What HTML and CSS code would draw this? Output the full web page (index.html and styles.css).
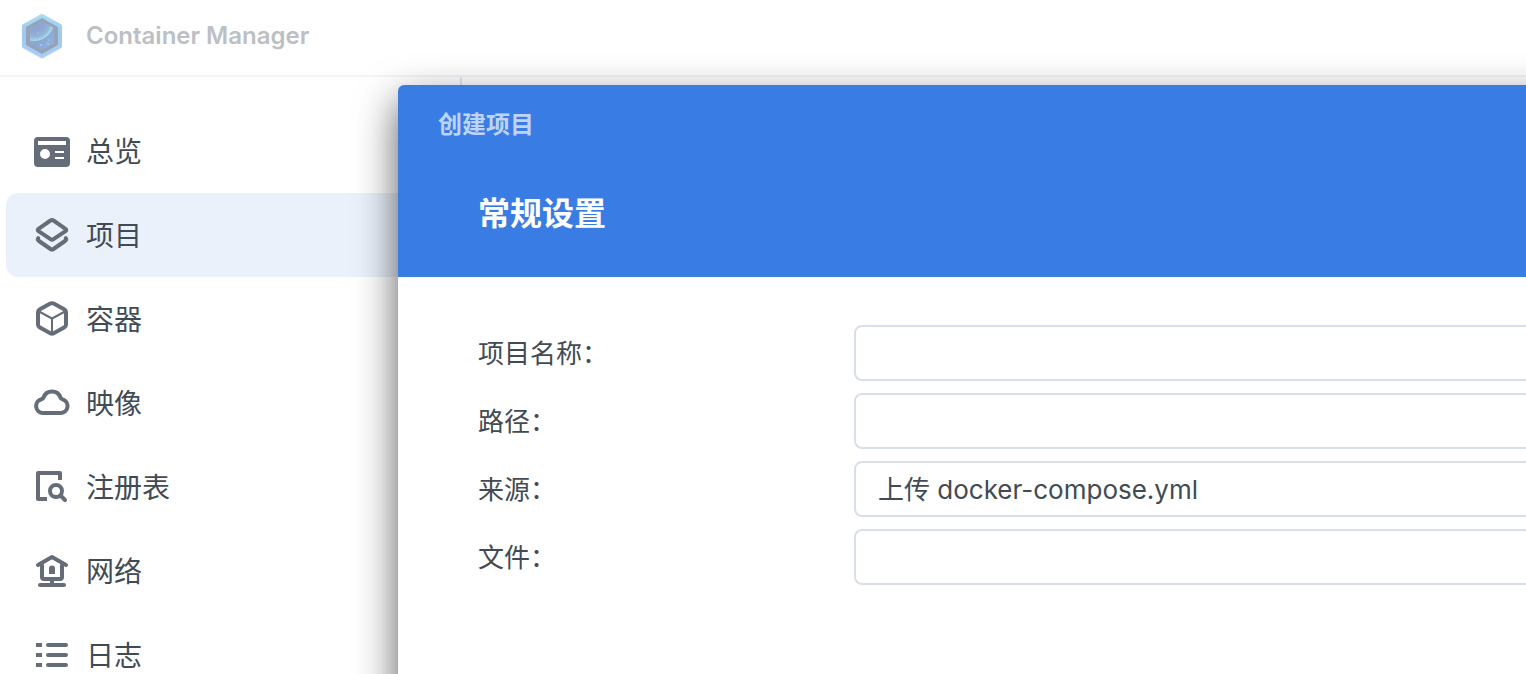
FILE: index.html
```html
<!DOCTYPE html>
<html lang="zh-CN">
<head>
<meta charset="utf-8">
<title>Container Manager</title>
<link rel="stylesheet" href="styles.css">
</head>
<body>
<div class="app">
  <header class="titlebar">
    <svg class="logo" viewBox="0 0 44 48" aria-hidden="true">
      <defs>
        <linearGradient id="rim" x1="0" y1="0" x2="0" y2="1"><stop offset="0" stop-color="#a9dcf3"/><stop offset=".4" stop-color="#9cc9ef"/><stop offset="1" stop-color="#a8cdf6"/></linearGradient>
        <linearGradient id="sky" x1="0" y1="0" x2="1" y2="1"><stop offset="0" stop-color="#9db2d8"/><stop offset=".5" stop-color="#8ca6d3"/><stop offset="1" stop-color="#8eb6e2"/></linearGradient>
        <radialGradient id="planet" gradientUnits="userSpaceOnUse" cx="14" cy="9" r="20"><stop offset=".5" stop-color="#8fa6d2"/><stop offset=".8" stop-color="#93b6da"/><stop offset="1" stop-color="#aedbe8"/></radialGradient>
        <clipPath id="window"><path d="M22 9 34 16V31L22 38 10 31V16Z"/></clipPath>
      </defs>
      <path d="M22 4 40 14V35L22 45 4 35V14Z" fill="#e6eaf0" stroke="#e6eaf0" stroke-width="4" stroke-linejoin="round"/>
      <path d="M22 4 40 14V34L22 44 4 34V14Z" fill="url(#rim)" stroke="url(#rim)" stroke-width="4" stroke-linejoin="round"/>
      <path d="M22 7 37 15.500V32.500L22 41 7 32.500V15.500Z" fill="#95a3b6" stroke="#95a3b6" stroke-width="2" stroke-linejoin="round"/>
      <path d="M22 9 34 16V31L22 38 10 31V16Z" fill="url(#sky)"/>
      <g clip-path="url(#window)">
        <circle cx="14" cy="9" r="20" fill="url(#planet)"/>
        <g fill="#c5ddf8"><circle cx="21" cy="33" r=".8"/><circle cx="28" cy="32" r=".8"/><circle cx="29" cy="28" r=".6"/><circle cx="18" cy="21" r=".6"/></g>
      </g>
    </svg>
    <h1 class="app-name">Container Manager</h1>
  </header>
  <div class="workspace">
    <nav class="sidebar">
      <a class="nav-item" href="#overview">
        <svg class="icon" viewBox="0 0 36 36" aria-hidden="true"><path fill="currentColor" fill-rule="evenodd" d="M4 4H32a4 4 0 0 1 4 4V30a4 4 0 0 1-4 4H4a4 4 0 0 1-4-4V8A4 4 0 0 1 4 4ZM4 8V12H32V8ZM11 16a5 5 0 1 0 0 10 5 5 0 0 0 0-10ZM21 18v2h9v-2ZM21 24v2h9v-2Z"/></svg>
        <span>总览</span></a>
      <a class="nav-item selected" href="#project" aria-current="page">
        <svg class="icon line" viewBox="0 0 36 36" aria-hidden="true"><path d="M16.500 3.500Q18 2.500 19.500 3.500L31.500 11.800Q33 13 31.500 14.200L19.500 22.200Q18 23.200 16.500 22.200L4.500 14.200Q3 13 4.500 11.800Z"/><path d="M4.200 21.200Q3.200 22.500 5 24L16.500 32Q18 33 19.500 32L31 24Q32.800 22.500 31.800 21.200"/></svg>
        <span>项目</span></a>
      <a class="nav-item" href="#container">
        <svg class="icon line" viewBox="0 0 36 36" aria-hidden="true"><path d="M16.300 2.600Q18 1.700 19.700 2.600L30.500 8.600Q32 9.400 32 11.400V23.400Q32 25.400 30.500 26.200L19.700 32.200Q18 33.100 16.300 32.200L5.500 26.200Q4 25.400 4 23.400V11.400Q4 9.400 5.500 8.600Z"/><path class="fine" d="M5 10.500 18 17.500 31 10.500M18 17.500V33"/></svg>
        <span>容器</span></a>
      <a class="nav-item" href="#image">
        <svg class="icon line" viewBox="0 0 36 36" aria-hidden="true"><path d="M9 28A7 7 0 0 1 7.500 14.200Q9.200 13.900 9.500 12.500A9 9 0 0 1 26.500 12.500Q26.800 14 28.500 14.300A7 7 0 0 1 27 28Z"/></svg>
        <span>映像</span></a>
      <a class="nav-item" href="#registry">
        <svg class="icon line" viewBox="0 0 36 36" aria-hidden="true"><path stroke-linecap="butt" d="M13 30H4V4H26V11"/><circle cx="22" cy="22" r="6"/><path d="M27 27 31 31"/></svg>
        <span>注册表</span></a>
      <a class="nav-item" href="#network">
        <svg class="icon line" viewBox="0 0 36 36" aria-hidden="true"><path d="M4 12 18 4 32 12M8 12V24Q8 26 10 26H26Q28 26 28 24V12M6 32H30"/><path stroke-linecap="butt" d="M18 26V32"/><path class="solid" d="M15 21V15.500a3 3 0 0 1 6 0V21Z"/></svg>
        <span>网络</span></a>
      <a class="nav-item" href="#log">
        <svg class="icon line" viewBox="0 0 36 36" aria-hidden="true"><path stroke-linecap="butt" d="M2 8H8M2 18H8M2 28H8"/><path d="M14 8H32M14 18H32M14 28H32"/></svg>
        <span>日志</span></a>
    </nav>
    <main class="content"></main>
  </div>
  <section class="dialog" role="dialog" aria-labelledby="dialog-title">
    <header class="dialog-head">
      <h2 class="dialog-title" id="dialog-title">创建项目</h2>
      <h3 class="step-title">常规设置</h3>
    </header>
    <form class="form">
      <div class="field"><label for="name">项目名称：</label><input class="control" id="name" type="text"></div>
      <div class="field"><label for="path">路径：</label><input class="control" id="path" type="text"></div>
      <div class="field"><label for="source">来源：</label><select class="control" id="source"><option>上传 docker-compose.yml</option></select></div>
      <div class="field"><label for="file">文件：</label><input class="control" id="file" type="text"></div>
    </form>
  </section>
</div>
</body>
</html>
```
FILE: styles.css
```css
* { box-sizing: border-box; }

body {
  margin: 0;
  font-family: Inter, "Noto Sans CJK SC", sans-serif;
  color: #414b55;
  background: #fff;
}

h1, h2, h3 { margin: 0; }

.app {
  position: relative;
  display: flex;
  flex-direction: column;
  height: 100vh;
  overflow: hidden;
}

.titlebar {
  display: flex;
  flex: none;
  align-items: center;
  gap: 22px;
  padding: 12px 20px 15px;
  border-bottom: 2px solid #f4f5fa;
}

.logo { width: 44px; height: 48px; }

.app-name {
  font-size: 24px;
  font-weight: 600;
  line-height: 32px;
  color: #bcc0c4;
}

.workspace { display: flex; flex: 1; }

.sidebar {
  width: 462px;
  padding: 32px 6px;
  border-right: 2px solid #e6e9ef;
}

.nav-item {
  display: flex;
  align-items: center;
  gap: 16px;
  height: 84px;
  padding: 0 28px;
  border-radius: 12px;
  font-size: 28px;
  line-height: 40px;
  color: inherit;
  text-decoration: none;
}

.nav-item span { padding-top: 2px; }
.selected { background: #eaf1fb; }

.icon { flex: none; width: 36px; height: 36px; color: #646d78; }

.line {
  fill: none;
  stroke: currentColor;
  stroke-width: 4;
  stroke-linecap: round;
  stroke-linejoin: round;
}

.fine { stroke-width: 2; }
.solid { fill: currentColor; stroke: none; }
.content { flex: 1; }

.dialog {
  position: absolute;
  top: 85px;
  right: -80px;
  bottom: -80px;
  left: 398px;
  border-radius: 6px;
  background: #fff;
  box-shadow: 0 16px 40px rgba(0, 0, 0, 0.65);
}

.dialog-head {
  padding: 24px 40px 38px;
  border-radius: 6px 6px 0 0;
  background: #397de4;
}

.dialog-title {
  font-size: 24px;
  line-height: 32px;
  color: #bdd4f7;
}

.step-title {
  padding: 48px 40px 0;
  font-size: 32px;
  line-height: 50px;
  color: #fff;
}

.form {
  display: flex;
  flex-direction: column;
  gap: 12px;
  padding: 48px 40px 48px 80px;
}

.field {
  display: grid;
  grid-template-columns: 376px 1fr;
  align-items: center;
  font-size: 26px;
  line-height: 40px;
}

.field label { padding-top: 2px; }

.control {
  width: 100%;
  height: 56px;
  padding: 2px 22px 0;
  border: 2px solid #d9dfe9;
  border-radius: 8px;
  font: inherit;
  color: inherit;
  background: #fff;
  appearance: none;
}
```
